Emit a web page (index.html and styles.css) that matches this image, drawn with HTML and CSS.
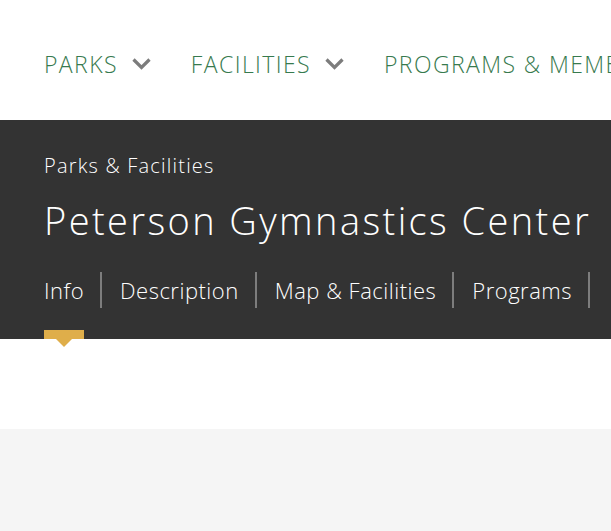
FILE: index.html
```html
<!DOCTYPE html>
<html lang="en">
<head>
  <meta charset="UTF-8">
  <meta name="viewport" content="width=device-width, initial-scale=1.0">
  <title>Peterson Gymnastics Center</title>
  <link rel="stylesheet" href="styles.css">
</head>
<body>
  <header class="site-header">
    <nav class="main-nav">
      <a class="nav-item">PARKS
        <svg class="chevron" viewBox="0 0 19 12"><path d="M1.5 1.5l8 8 8-8" fill="none" stroke="currentColor" stroke-width="3.2"/></svg>
      </a>
      <a class="nav-item">FACILITIES
        <svg class="chevron" viewBox="0 0 19 12"><path d="M1.5 1.5l8 8 8-8" fill="none" stroke="currentColor" stroke-width="3.2"/></svg>
      </a>
      <a class="nav-item">PROGRAMS &amp; MEMBERSHIPS
        <svg class="chevron" viewBox="0 0 19 12"><path d="M1.5 1.5l8 8 8-8" fill="none" stroke="currentColor" stroke-width="3.2"/></svg>
      </a>
    </nav>
  </header>

  <section class="hero">
    <div class="breadcrumb">Parks &amp; Facilities</div>
    <h1 class="title">Peterson Gymnastics Center</h1>
    <ul class="tabs">
      <li class="tab active">Info</li>
      <li class="tab">Description</li>
      <li class="tab">Map &amp; Facilities</li>
      <li class="tab">Programs</li>
    </ul>
  </section>

  <div class="spacer"></div>
  <main class="content"></main>
</body>
</html>
```

FILE: styles.css
```css
html, body {
  margin: 0;
  padding: 0;
}
body {
  font-family: 'Open Sans', sans-serif;
  font-weight: 300;
  background: #fff;
  overflow: hidden;
  height: 531px;
}
.site-header {
  height: 120px;
  display: flex;
  align-items: center;
  padding-left: 44px;
  white-space: nowrap;
}
.main-nav {
  display: flex;
  gap: 40px;
  padding-top: 8px;
}
.nav-item {
  display: flex;
  align-items: center;
  gap: 14px;
  color: #377a4e;
  font-size: 23px;
  letter-spacing: 1.4px;
}
.chevron {
  width: 19px;
  height: 12px;
  color: #7c7c7c;
}
.hero {
  background: #333;
  height: 219px;
  box-sizing: border-box;
  padding: 32px 44px 0;
  color: #fff;
  white-space: nowrap;
}
.breadcrumb {
  font-size: 20px;
  line-height: 28px;
  letter-spacing: 1.2px;
}
.title {
  margin: 16px 0 0;
  font-weight: 300;
  font-size: 38px;
  line-height: 48px;
  letter-spacing: 2.4px;
}
.tabs {
  list-style: none;
  margin: 28px 0 0;
  padding: 0;
  display: flex;
}
.tab {
  position: relative;
  font-size: 22px;
  line-height: 36px;
  letter-spacing: 0.5px;
  padding: 0 16px 0 18px;
  border-right: 2px solid #7d7d7d;
}
.tab:first-child {
  padding-left: 0;
}
.tab.active::after {
  content: '';
  position: absolute;
  left: 0;
  top: 58px;
  width: 40px;
  height: 9px;
  background: #dfae4a;
}
.tab.active::before {
  content: '';
  position: absolute;
  left: 12px;
  top: 67px;
  border-left: 8px solid transparent;
  border-right: 8px solid transparent;
  border-top: 8px solid #dfae4a;
}
.spacer {
  height: 90px;
}
.content {
  background: #f5f5f5;
  height: 102px;
}
```
